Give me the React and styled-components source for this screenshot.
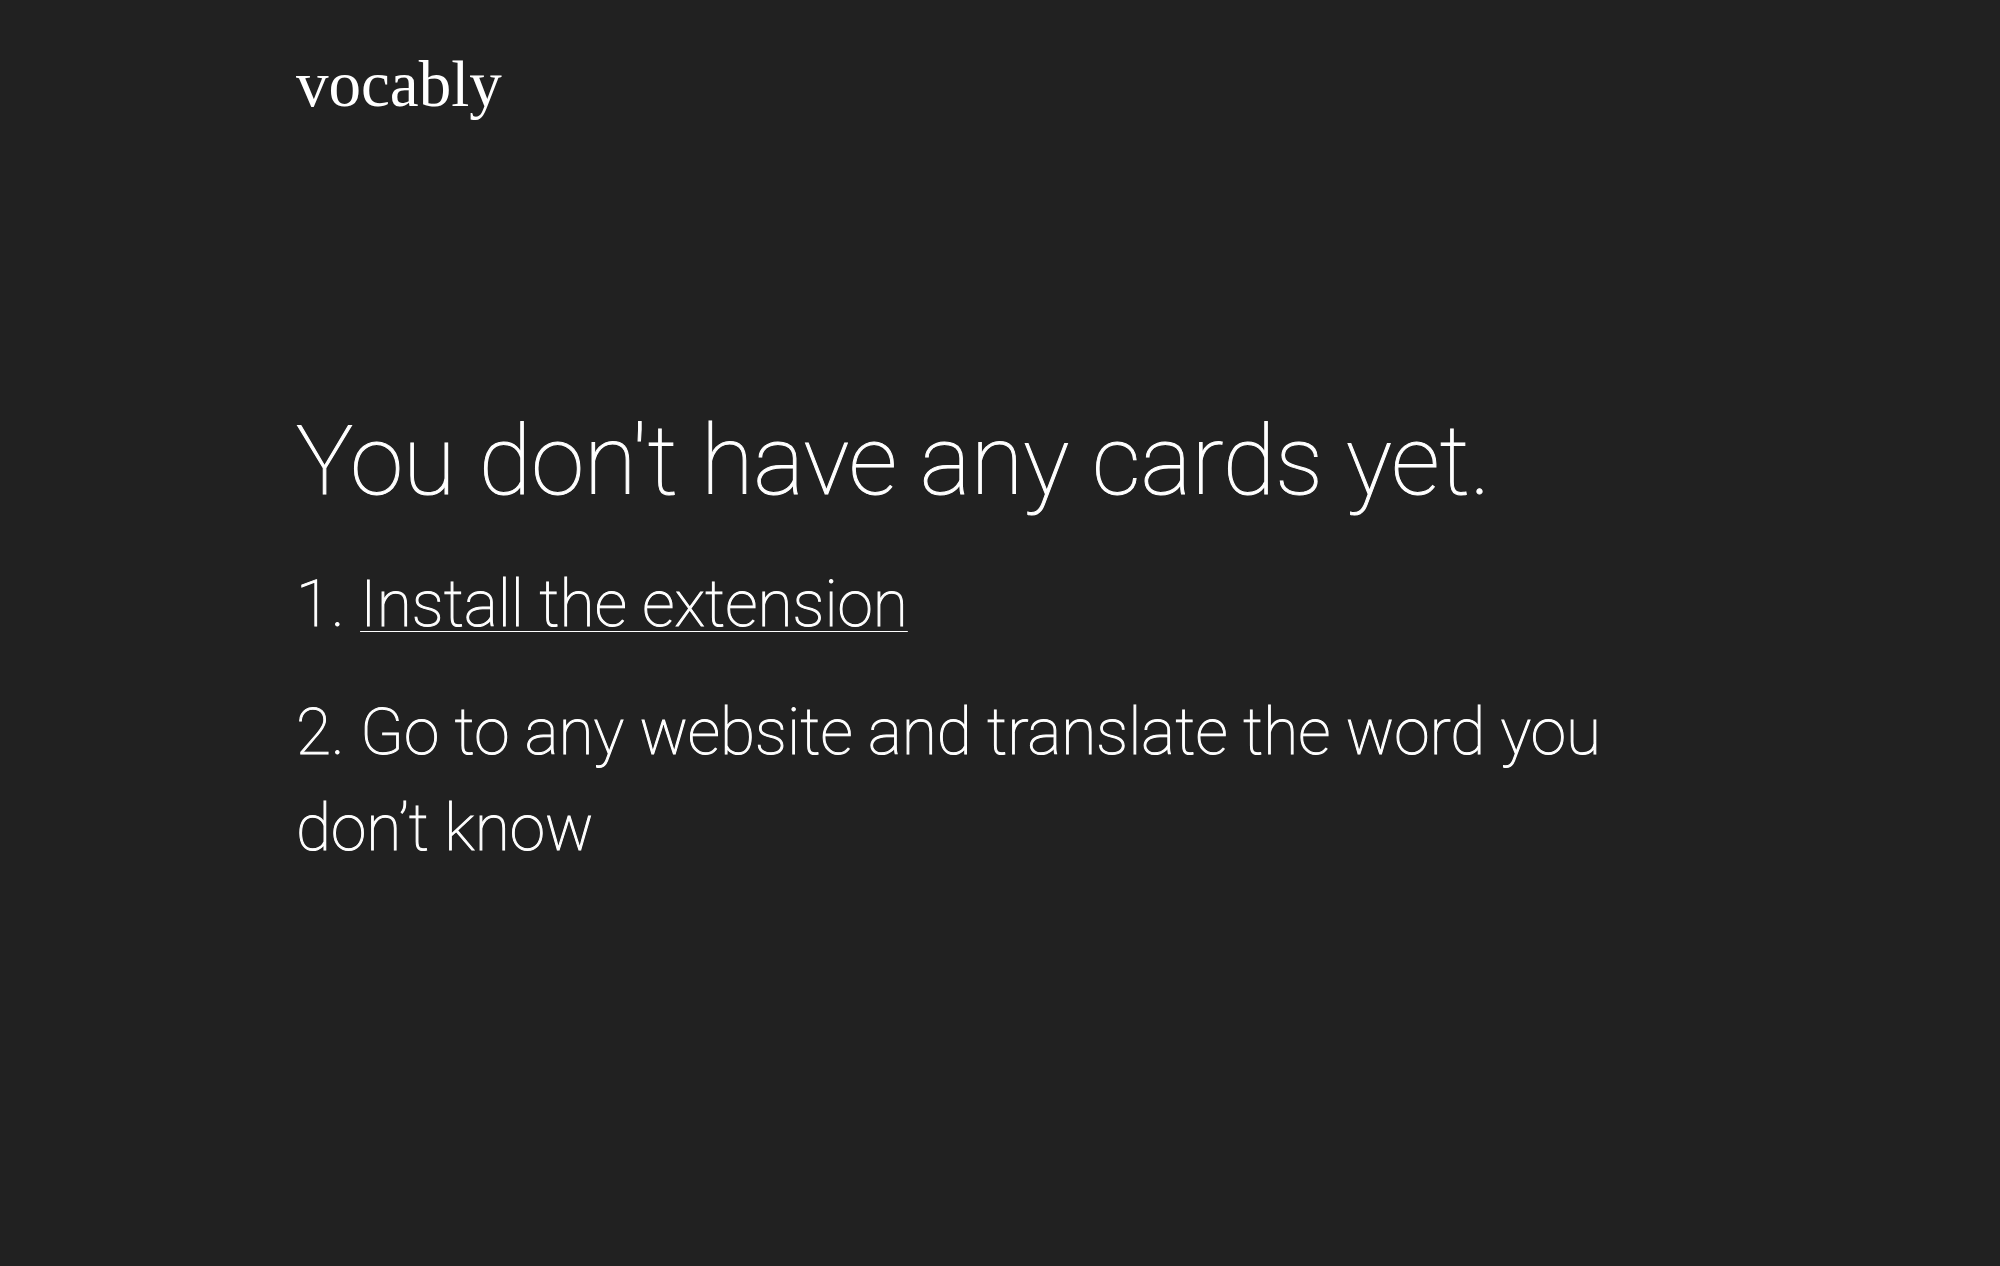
import React from "react";
import styled, { createGlobalStyle } from "styled-components";

const GlobalStyle = createGlobalStyle`
  body {
    margin: 0;
    background: #212121;
    color: #ffffff;
    font-family: Roboto, "Liberation Sans", sans-serif;
    font-weight: 100;
  }
`;

const Page = styled.div`
  max-width: 1408px;
  margin: 0 auto;
  padding: 40px 24px;
`;

const Logo = styled.a`
  display: inline-block;
  color: inherit;
  text-decoration: none;
  font-family: "Liberation Serif", serif;
  font-size: 65px;
  font-weight: 400;
  line-height: 89px;
`;

const Main = styled.main`
  padding-top: 268px;
  -webkit-text-stroke: 1px #ffffff;
`;

const Title = styled.h1`
  margin: 0;
  font-size: 96px;
  font-weight: 100;
  line-height: 128px;
`;

const Step = styled.p`
  margin: 32px 0 0;
  font-size: 64px;
  line-height: 96px;
`;

const StepLink = styled.a`
  color: inherit;
  text-decoration: underline;
  text-decoration-thickness: 1px;
  text-underline-offset: 5px;
`;

export default function App() {
  return (
    <>
      <GlobalStyle />
      <Page>
        <header>
          <Logo href="#">vocably</Logo>
        </header>
        <Main>
          <Title>You don't have any cards yet.</Title>
          <Step>
            1. <StepLink href="#">Install the extension</StepLink>
          </Step>
          <Step>2. Go to any website and translate the word you don’t know</Step>
        </Main>
      </Page>
    </>
  );
}
